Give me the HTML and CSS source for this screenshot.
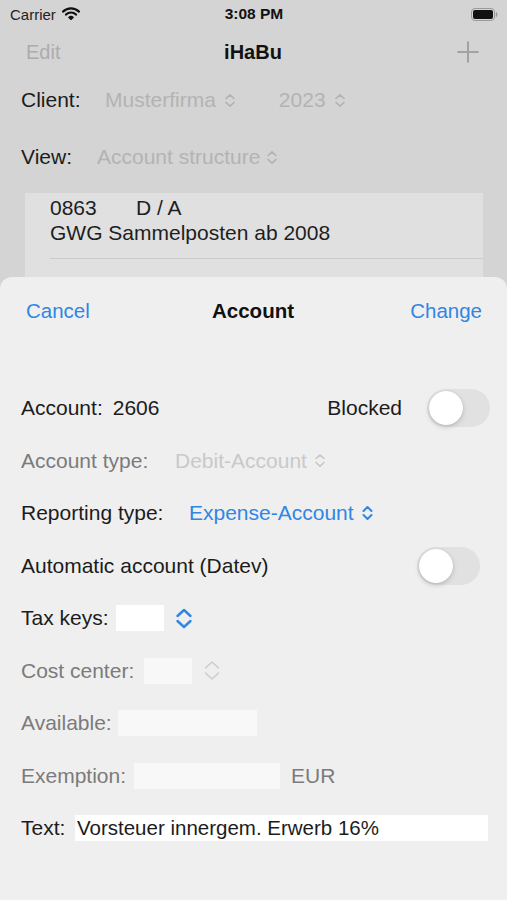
FILE: index.html
```html
<!DOCTYPE html>
<html lang="en">
<head>
    <meta charset="UTF-8">
    <meta name="viewport" content="width=device-width, initial-scale=1.0">
    <title>iHaBu - Account</title>
    <link rel="stylesheet" href="styles.css">
</head>
<body>
    <div class="screen">
        <div class="status">
            <div class="carrier">
                Carrier
                <svg class="wifi" width="18" height="13" viewBox="0 0 18 13">
                    <path d="M1 4.6 A11.5 11.5 0 0 1 17 4.6" fill="none" stroke="#111" stroke-width="2.2" stroke-linecap="round"/>
                    <path d="M4 7.6 A7 7 0 0 1 14 7.6" fill="none" stroke="#111" stroke-width="2.2" stroke-linecap="round"/>
                    <path d="M6.8 10.4 A3 3 0 0 1 11.2 10.4 L9 12.6 Z" fill="#111" stroke="#111" stroke-width="1.2" stroke-linejoin="round"/>
                </svg>
            </div>
            <div class="time">3:08 PM</div>
            <div class="battery">
                <svg width="27" height="13" viewBox="0 0 27 13">
                    <rect x="0.5" y="0.5" width="23" height="12" rx="3.5" fill="none" stroke="#9a9a9a" stroke-width="1"/>
                    <rect x="2" y="2" width="20" height="9" rx="2" fill="#111"/>
                    <path d="M25 4.5 Q26.5 6.5 25 8.5" fill="none" stroke="#9a9a9a" stroke-width="1.4"/>
                </svg>
            </div>
        </div>

        <div class="nav">
            <span class="nav-edit">Edit</span>
            <span class="nav-title">iHaBu</span>
            <span class="nav-add">
                <svg width="24" height="24" viewBox="0 0 24 24">
                    <path d="M12 1.5 V22.5 M1.5 12 H22.5" stroke="#a2a2a2" stroke-width="2"/>
                </svg>
            </span>
        </div>

        <div class="filter">
            <span class="filter-label">Client:</span>
            <span class="picker client-picker">Musterfirma
                <svg class="chev" width="12" height="15" viewBox="0 0 12 15"><path d="M2 5.5 L6 1.8 L10 5.5 M2 9.5 L6 13.2 L10 9.5" fill="none" stroke="currentColor" stroke-width="1.7" stroke-linecap="round" stroke-linejoin="round"/></svg>
            </span>
            <span class="picker year-picker">2023
                <svg class="chev" width="12" height="15" viewBox="0 0 12 15"><path d="M2 5.5 L6 1.8 L10 5.5 M2 9.5 L6 13.2 L10 9.5" fill="none" stroke="currentColor" stroke-width="1.7" stroke-linecap="round" stroke-linejoin="round"/></svg>
            </span>
        </div>

        <div class="filter view-filter">
            <span class="filter-label">View:</span>
            <span class="picker view-picker">Account structure
                <svg class="chev" width="12" height="15" viewBox="0 0 12 15"><path d="M2 5.5 L6 1.8 L10 5.5 M2 9.5 L6 13.2 L10 9.5" fill="none" stroke="currentColor" stroke-width="1.7" stroke-linecap="round" stroke-linejoin="round"/></svg>
            </span>
        </div>

        <div class="list">
            <div class="list-item">
                <div class="item-head"><span class="item-no">0863</span><span>D / A</span></div>
                <div>GWG Sammelposten ab 2008</div>
            </div>
        </div>

        <!-- modal sheet -->
        <div class="sheet">
            <div class="sheet-header">
                <span class="link">Cancel</span>
                <span class="sheet-title">Account</span>
                <span class="link">Change</span>
            </div>

            <div class="form">
                <div class="row">
                    <span>Account:</span>
                    <span class="account-no">2606</span>
                    <span class="blocked">Blocked</span>
                    <span class="toggle toggle-blocked"><span class="knob"></span></span>
                </div>
                <div class="row muted">
                    <span class="label label-type">Account type:</span>
                    <span class="select disabled-value">Debit-Account
                        <svg class="chev" width="12" height="15" viewBox="0 0 12 15"><path d="M2 5.5 L6 1.8 L10 5.5 M2 9.5 L6 13.2 L10 9.5" fill="none" stroke="currentColor" stroke-width="1.7" stroke-linecap="round" stroke-linejoin="round"/></svg>
                    </span>
                </div>
                <div class="row">
                    <span class="label label-reporting">Reporting type:</span>
                    <span class="select link">Expense-Account
                        <svg class="chev" width="13" height="16" viewBox="0 0 13 16"><path d="M2.5 6 L6.5 2 L10.5 6 M2.5 10 L6.5 14 L10.5 10" fill="none" stroke="currentColor" stroke-width="2" stroke-linecap="round" stroke-linejoin="round"/></svg>
                    </span>
                </div>
                <div class="row">
                    <span>Automatic account (Datev)</span>
                    <span class="toggle toggle-datev"><span class="knob"></span></span>
                </div>
                <div class="row">
                    <span class="label label-tax">Tax keys:</span>
                    <span class="field field-key"></span>
                    <svg class="stepper" width="18" height="21" viewBox="0 0 18 21"><path d="M2.5 8 L9 2 L15.5 8 M2.5 13 L9 19 L15.5 13" fill="none" stroke="#2f86e4" stroke-width="2.4" stroke-linecap="round" stroke-linejoin="round"/></svg>
                </div>
                <div class="row muted">
                    <span class="label label-cost">Cost center:</span>
                    <span class="field field-key disabled"></span>
                    <svg class="stepper" width="18" height="21" viewBox="0 0 18 21"><path d="M2.5 8 L9 2 L15.5 8 M2.5 13 L9 19 L15.5 13" fill="none" stroke="#cdcdcd" stroke-width="1.6" stroke-linecap="round" stroke-linejoin="round"/></svg>
                </div>
                <div class="row muted">
                    <span class="label label-available">Available:</span>
                    <span class="field field-available disabled"></span>
                </div>
                <div class="row muted">
                    <span class="label label-exemption">Exemption:</span>
                    <span class="field field-exemption disabled"></span>
                    <span class="currency">EUR</span>
                </div>
                <div class="row">
                    <span class="label label-text">Text:</span>
                    <span class="field field-text">Vorsteuer innergem. Erwerb 16%</span>
                </div>
            </div>
        </div>
    </div>
</body>
</html>
```

FILE: styles.css
```css
body {
    margin: 0;
    padding: 0;
    font-family: "Liberation Sans", Arial, sans-serif;
    background-color: #d4d4d4;
}

.screen {
    position: relative;
    width: 507px;
    height: 900px;
    overflow: hidden;
    background-color: #d4d4d4;
    color: #1c1c1c;
    font-size: 21px;
}

/* status bar */

.status {
    display: grid;
    grid-template-columns: 1fr auto 1fr;
    align-items: center;
    height: 28px;
    padding: 0 9px 0 10px;
}

.carrier {
    display: flex;
    align-items: center;
    gap: 6px;
    font-size: 15px;
    color: #222;
}

.wifi {
    margin-top: -2px;
}

.time {
    font-size: 15.5px;
    font-weight: bold;
    color: #111;
}

.battery {
    display: flex;
    justify-content: flex-end;
}

/* nav bar */

.nav {
    display: grid;
    grid-template-columns: 1fr auto 1fr;
    align-items: center;
    height: 48px;
    padding: 0 27px 0 26px;
}

.nav-edit {
    font-size: 20px;
    color: #acacac;
}

.nav-title {
    font-size: 20px;
    font-weight: bold;
    color: #111;
}

.nav-add {
    display: flex;
    justify-content: flex-end;
}

/* filters */

.filter {
    display: flex;
    align-items: center;
    height: 48px;
    padding-left: 21px;
}

.view-filter {
    margin-top: 9px;
}

.filter-label {
    width: 84px;
}

.view-filter .filter-label {
    width: 76px;
}

.picker {
    display: flex;
    align-items: center;
    gap: 8px;
    color: #b3b3b3;
}

.year-picker {
    margin-left: 43px;
}

.view-picker {
    gap: 6px;
}

/* background list */

.list {
    margin: 12px 24px 0 25px;
    background-color: #e0e0e0;
    height: 120px;
}

.list-item {
    margin-left: 25px;
    padding-top: 2px;
    height: 63px;
    border-bottom: 1px solid #cbcbcb;
    line-height: 25px;
    font-size: 21px;
    color: #1e1e1e;
}

.item-no {
    display: inline-block;
    width: 86px;
}

/* sheet */

.sheet {
    position: absolute;
    top: 277px;
    left: 0;
    right: 0;
    bottom: 0;
    background-color: #efefef;
    border-radius: 12px 12px 0 0;
}

.sheet-header {
    display: flex;
    justify-content: space-between;
    align-items: center;
    height: 68px;
    padding: 0 25px 0 26px;
    font-size: 20.5px;
}

.sheet-title {
    font-weight: bold;
    color: #111;
    margin-left: 6px;
}

.link {
    color: #2f86e4;
}

.form {
    padding: 36.75px 0 0 21px;
}

.row {
    display: flex;
    align-items: center;
    height: 52.5px;
    color: #1c1c1c;
}

.muted {
    color: #7b7b7b;
}

.label {
    flex-shrink: 0;
    white-space: nowrap;
}

.label-type { width: 154px; }
.label-reporting { width: 168px; }
.label-tax { width: 95px; }
.label-cost { width: 123px; }
.label-available { width: 97px; }
.label-exemption { width: 113px; }
.label-text { width: 54px; }

.account-no {
    margin-left: 10px;
}

.blocked {
    margin-left: auto;
    margin-right: 25px;
}

.select {
    display: flex;
    align-items: center;
    gap: 7px;
}

.disabled-value {
    color: #c9c9c9;
}

.toggle {
    position: relative;
    width: 63px;
    height: 38px;
    border-radius: 19px;
    background-color: #e1e1e1;
}

.toggle-blocked {
    margin-right: 17px;
}

.toggle-datev {
    margin-left: auto;
    margin-right: 27px;
}

.knob {
    position: absolute;
    top: 2px;
    left: 2px;
    width: 34px;
    height: 34px;
    border-radius: 50%;
    background-color: #fff;
    box-shadow: 0 2px 5px rgba(0, 0, 0, 0.18), 0 0 1px rgba(0, 0, 0, 0.15);
}

.field {
    display: block;
    height: 26px;
    background-color: #fff;
}

.field.disabled {
    background-color: #f8f8f8;
}

.field-key {
    width: 48px;
}

.stepper {
    margin-left: 11px;
}

.field-available {
    width: 139px;
}

.field-exemption {
    width: 146px;
}

.currency {
    margin-left: 11px;
}

.field-text {
    flex: 1;
    margin-right: 19px;
    padding-left: 2px;
    line-height: 26px;
    font-size: 20.5px;
    color: #1c1c1c;
}
```
